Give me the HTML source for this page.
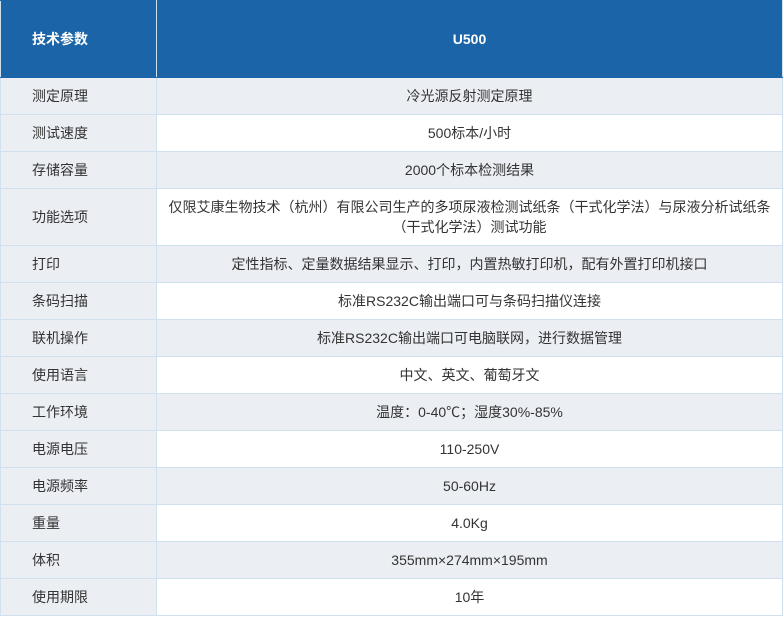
<!DOCTYPE html><html><head><meta charset="utf-8"><style>
body{margin:0;background:#fff;font-family:"Liberation Sans","Noto Sans CJK SC",sans-serif;font-size:14px;color:#333}
table{border-collapse:collapse;width:783px;table-layout:fixed;position:absolute;left:0;top:0}
td{border:1px solid #cfe0ee;height:36px;padding:0;text-align:center;line-height:20px}
td:first-child{width:124px;text-align:left;padding-left:31px;background:#ebeef3}
tr.g td{background:#ebeef3}
tr.h td{background:#1b64a7;color:#fff;font-weight:bold;height:76px;border-color:#1b64a7 #cfe0ee}
tr.h td:first-child{background:#1b64a7}
</style></head><body><table>
<tr class="h"><td>技术参数</td><td>U500</td></tr>
<tr class="g"><td>测定原理</td><td>冷光源反射测定原理</td></tr>
<tr><td>测试速度</td><td>500标本/小时</td></tr>
<tr class="g"><td>存储容量</td><td>2000个标本检测结果</td></tr>
<tr><td style="height:56px">功能选项</td><td>仅限艾康生物技术（杭州）有限公司生产的多项尿液检测试纸条（干式化学法）与尿液分析试纸条<br>（干式化学法）测试功能</td></tr>
<tr class="g"><td>打印</td><td>定性指标、定量数据结果显示、打印，内置热敏打印机，配有外置打印机接口</td></tr>
<tr><td>条码扫描</td><td>标准RS232C输出端口可与条码扫描仪连接</td></tr>
<tr class="g"><td>联机操作</td><td>标准RS232C输出端口可电脑联网，进行数据管理</td></tr>
<tr><td>使用语言</td><td>中文、英文、葡萄牙文</td></tr>
<tr class="g"><td>工作环境</td><td>温度：0-40℃；湿度30%-85%</td></tr>
<tr><td>电源电压</td><td>110-250V</td></tr>
<tr class="g"><td>电源频率</td><td>50-60Hz</td></tr>
<tr><td>重量</td><td>4.0Kg</td></tr>
<tr class="g"><td>体积</td><td>355mm×274mm×195mm</td></tr>
<tr><td>使用期限</td><td>10年</td></tr>
</table></body></html>
